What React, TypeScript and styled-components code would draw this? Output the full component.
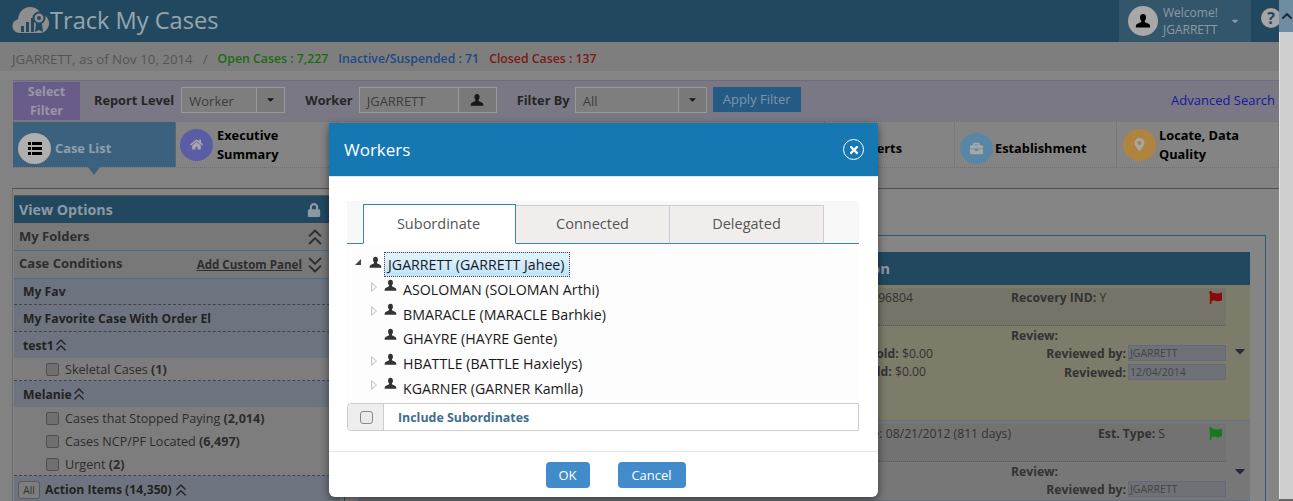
import React from "react";
import styled, { createGlobalStyle } from "styled-components";
import { FaHome, FaBriefcase, FaMapMarkerAlt, FaLock, FaFlag, FaTimes, FaCaretDown } from "react-icons/fa";
import { ChevronsUp, ChevronsDown, ChevronUp } from "lucide-react";

const SHADE = 0.3;
// Colour under the backdrop that comes out as the given dimmed colour.
const lit = (hex: string) => {
  const n = parseInt(hex.slice(1), 16);
  const c = [n >> 16, (n >> 8) & 255, n & 255].map((v) => Math.min(255, Math.round(v / (1 - SHADE))));
  return `rgb(${c.join(",")})`;
};

const Global = createGlobalStyle`
  html, body { margin: 0; height: 501px; overflow: hidden; background: #fff; }
  * { box-sizing: border-box; }
  body { font-family: "Open Sans", "Liberation Sans", sans-serif; }
`;

const Shell = styled.div`display: flex; width: 1293px; height: 501px; overflow: hidden; position: relative;`;
const Page = styled.div`width: 1279px; height: 501px; flex: none; overflow: hidden; background: ${lit("#828282")}; position: relative;`;
const Scrollbar = styled.div`flex: 1; display: flex; flex-direction: column; background: #cfcfcf;`;
const ScrollUp = styled.div`height: 32px; background: #6f8da1; color: #1d2c36; display: flex; align-items: center; justify-content: center;`;
const ScrollTrack = styled.div`flex: 1; border-left: 1px solid #e2e2e2;`;
const ScrollEnd = styled.div`height: 2px; background: #666;`;

const Header = styled.header`height: 42px; background: ${lit("#23495f")}; display: flex; align-items: stretch; padding-left: 12px;`;
const Brand = styled.div`display: flex; align-items: center; flex: 1; color: ${lit("#96a5ae")}; font-size: 23.6px; line-height: 38px; padding-bottom: 3px;`;
const UserBox = styled.div`width: 132px; background: ${lit("#33566b")}; display: flex; align-items: center; padding-left: 9px; gap: 5px; position: relative;`;
const Avatar = styled.div`width: 30px; height: 30px; border-radius: 50%; background: ${lit("#a9a9a9")}; color: #000; display: flex; align-items: center; justify-content: center;`;
const UserText = styled.div`color: ${lit("#8c9aa3")}; font-size: 12px; line-height: 17px; flex: 1;`;
const UserCaret = styled.span`color: ${lit("#8c9aa3")}; font-size: 10px; margin-right: 11px; display: flex;`;
const Help = styled.div`width: 20px; height: 20px; margin: 8px -2px 0 10px; flex: none; border-radius: 50%; background: ${lit("#a5a5a5")}; color: ${lit("#23495f")}; font-size: 16px; font-weight: 700; line-height: 20px; text-align: center;`;

const StatusBar = styled.div`height: 29px; padding: 4px 0 0 12px; background: ${lit("#7f7f7f")}; display: flex; align-items: center; font-size: 13.3px; color: ${lit("#555555")};`;
const Slash = styled.span`margin: 0 10px;`;
const Count = styled.span<{ $c: string }>`color: ${(p) => p.$c}; font-weight: 600; margin-right: 10px; font-size: 12.3px;`;
const StatusGap = styled.div`height: 9px; background: ${lit("#868686")};`;

const FilterRow = styled.div`height: 41px; margin-left: 13px; border-top: 1px solid ${lit("#6e6c85")}; background: ${lit("#7a7985")}; display: flex; align-items: center; font-size: 12.8px; padding-bottom: 3px;`;
const SelectFilter = styled.div`width: 67px; height: 38px; margin-top: 3px; background: ${lit("#6b5d89")}; color: ${lit("#9a96a8")}; font-weight: 700; font-size: 12.5px; line-height: 19px; text-align: center; margin-bottom: 1px; padding-bottom: 2px;`;
const FieldLabel = styled.span<{ $l: number; $r?: number }>`font-weight: 700; color: ${lit("#262626")}; margin: 0 ${(p) => p.$r ?? 7}px 0 ${(p) => p.$l}px;`;
const FieldBox = styled.div<{ $w: number }>`width: ${(p) => p.$w}px; height: 26px; border: 1px solid ${lit("#9a9a9a")}; display: flex; align-items: stretch; color: ${lit("#3d3d3d")}; background: ${lit("#7f7f80")};`;
const FieldValue = styled.div`flex: 1; padding: 0 7px; line-height: 26px; font-size: 13px;`;
const FieldButton = styled.div<{ $w: number }>`width: ${(p) => p.$w}px; border-left: 1px solid ${lit("#9a9a9a")}; background: ${lit("#7a7a7a")}; color: #222; display: flex; align-items: center; justify-content: center; font-size: 11px;`;
const Apply = styled.div`width: 88px; height: 25px; margin-left: 6px; margin-bottom: 1px; background: ${lit("#255a85")}; color: ${lit("#7e94a8")}; font-size: 13px; line-height: 25px; text-align: center;`;
const Advanced = styled.a`margin-left: auto; margin-right: 4px; color: ${lit("#1a1a9c")}; font-size: 13px; margin-top: 1px;`;

const TabRow = styled.nav`height: 47px; margin-left: 13px; border-top: 1px dotted ${lit("#6f6f6f")}; border-bottom: 1px dotted ${lit("#6f6f6f")}; display: flex; background: ${lit("#858585")};`;
const NavTab = styled.div<{ $w?: number; $on?: boolean; $pl?: number; $gap?: number; $single?: boolean }>`
  ${(p) => (p.$w ? `width: ${p.$w}px; flex: none;` : "flex: 1;")}
  display: flex; align-items: center; gap: ${(p) => p.$gap ?? 4}px; padding-left: ${(p) => p.$pl ?? 4}px; position: relative;
  padding-top: ${(p) => (p.$single ? 7 : 0)}px;
  border-right: 1px dotted ${lit("#6f6f6f")};
  background: ${(p) => (p.$on ? lit("#3c627f") : "transparent")};
  color: ${(p) => (p.$on ? lit("#8f9eac") : "#000")};
  font-weight: 700; font-size: 12.8px; line-height: 19px;
  ${(p) => p.$on && `&::after { content: ""; position: absolute; left: 75px; bottom: -8px; border: 6px solid transparent; border-bottom-width: 0; border-top: 8px solid ${lit("#3c627f")}; }`}
`;
const NavIcon = styled.div<{ $bg: string; $c: string; $h?: number }>`width: 33px; height: ${(p) => p.$h ?? 32}px; flex: none; border-radius: 50%; background: ${(p) => lit(p.$bg)}; color: ${(p) => p.$c}; display: flex; align-items: center; justify-content: center; font-size: 13px;`;

const Main = styled.main`margin: 20px 0 0 12px; border-top: 1px solid ${lit("#4f4f4f")}; border-left: 1px solid ${lit("#6b6b6b")}; display: flex; height: 320px; background: ${lit("#868686")}; padding-left: 1px;`;
const Sidebar = styled.aside`width: 326px; flex: none; margin-top: 6px;`;
const SideHead = styled.div`height: 28px; background: ${lit("#23495f")}; color: ${lit("#8b9aa5")}; font-size: 14.2px; font-weight: 700; display: flex; align-items: center; justify-content: space-between; padding: 0 19px 0 5px; border-top: 1px solid ${lit("#555555")};`;
const Section = styled.div<{ $pb: number }>`height: 28px; padding: 0 20px ${(p) => p.$pb}px 5px; border-bottom: 1px solid ${lit("#3f6f8d")}; color: ${lit("#2e2e2e")}; font-size: 13px; font-weight: 700; background: ${lit("#797979")}; display: flex; align-items: center; justify-content: space-between;`;
const SectionRight = styled.div`display: flex; align-items: center; gap: 7px; padding-top: 3px;`;
const AddLink = styled.span`text-decoration: underline; font-size: 11.6px;`;
const BigUp = styled(ChevronsUp)`margin: -6px -8px -6px -7px;`;
const BigDown = styled(ChevronsDown)`margin: -6px -8px -6px -7px;`;
const SmallUp = styled(ChevronsUp)`margin: -5px -6px -5px -6px;`;
const Group = styled.div<{ $h?: number }>`height: ${(p) => p.$h ?? 27}px; padding: 0 9px; background: ${lit("#6e7480")}; color: ${lit("#232323")}; font-size: 12.2px; font-weight: 700; display: flex; align-items: center; gap: 3px; border-bottom: 1px dashed ${lit("#444444")};`;
const GroupPlain = styled(Group)`border-bottom: none;`;
const Check = styled.label`height: 23px; padding-left: 32px; background: ${lit("#7e7e7e")}; color: ${lit("#2c2c2c")}; font-size: 12.6px; display: flex; align-items: center; gap: 6px; b { font-weight: 700; }`;
const Box = styled.span`width: 13px; height: 13px; border-radius: 2px; border: 1px solid ${lit("#4f4f4f")}; background: ${lit("#6f6f6f")}; flex: none;`;
const CheckLast = styled(Check)`border-bottom: 1px dashed ${lit("#444444")};`;
const ActionRow = styled.div`height: 27px; padding: 0 4px; background: ${lit("#6e7480")}; color: ${lit("#232323")}; font-size: 12.2px; font-weight: 700; display: flex; align-items: center; gap: 5px;`;
const AllBtn = styled.span`width: 22px; height: 18px; border: 1px solid ${lit("#5a5a5a")}; border-radius: 3px; background: ${lit("#7f7f7f")}; font-size: 10px; font-weight: 400; text-align: center; line-height: 16px; color: ${lit("#333333")};`;

const Content = styled.section`width: 922px; margin: 46px 0 0 4px; border: 1px solid ${lit("#2a5a70")}; border-bottom: none; padding: 16px 15px 0 13px; flex: none; height: 300px;`;
const PanelHead = styled.div`height: 33px; background: ${lit("#23495f")}; color: ${lit("#8b9aa5")}; font-size: 15px; font-weight: 700; line-height: 33px; text-align: right; padding-right: 360px;`;
const Card = styled.div<{ $bg: string }>`background: ${(p) => lit(p.$bg)}; display: grid; grid-template-columns: 868px 1fr; border-bottom: 1px solid ${lit("#5f7480")}; padding-top: 3px; color: ${lit("#333333")}; font-size: 12.2px;`;
const CardTall = styled(Card)`height: 136px;`;
const CardMain = styled.div``;
const TopBlock = styled.div<{ $bg: string }>`height: 38px; background: ${(p) => lit(p.$bg)}; border-bottom: 1px dotted ${lit("#5a5a5a")}; display: grid; grid-template-columns: 653px 1fr;`;
const LeftCell = styled.div<{ $pr: number }>`text-align: right; padding: 0 ${(p) => p.$pr}px 0 0; line-height: 18px; padding-top: 1px;`;
const MidCell = styled.div<{ $pl?: number }>`display: flex; justify-content: space-between; padding: 1px 4px 0 ${(p) => p.$pl ?? 0}px; line-height: 18px; b { font-weight: 700; }`;
const FlagMark = styled.span<{ $c: string }>`color: ${(p) => p.$c}; font-size: 13px; margin-top: 1px;`;
const LowerBlock = styled.div`display: grid; grid-template-columns: 653px 1fr;`;
const Amounts = styled.div`padding-top: 19px; line-height: 18px; text-align: right; b { font-weight: 700; }`;
const Amount = styled.div<{ $pr: number }>`padding-right: ${(p) => p.$pr}px;`;
const Review = styled.div`padding-top: 1px; font-weight: 700;`;
const ReviewTitle = styled.div`line-height: 18px;`;
const ReviewRow = styled.div`display: flex; justify-content: flex-end; align-items: center; gap: 2px; margin-bottom: 3px; height: 16px;`;
const ReviewInput = styled.div`width: 98px; height: 16px; border: 1px solid ${lit("#646b7c")}; background: ${lit("#6f7278")}; color: ${lit("#444444")}; font-weight: 400; font-size: 10.5px; line-height: 15px; padding-left: 1px;`;
const CaretCol = styled.div`color: ${lit("#2a2a3c")}; padding: 55px 0 0 6px; font-size: 16px; line-height: 1;`;
const CaretColShort = styled(CaretCol)`padding-top: 39px;`;

const Backdrop = styled.div`position: absolute; inset: 0; background: rgba(0,0,0,${SHADE}); padding: 123px 0 0 329px;`;
const Modal = styled.div`width: 549px; height: 374px; background: #fff; border-radius: 0 0 6px 6px; box-shadow: 0 3px 9px rgba(0,0,0,.5); display: flex; flex-direction: column; font-family: "Open Sans", sans-serif;`;
const ModalHead = styled.div`height: 54px; flex: none; background: #1578b2; border-bottom: 1px solid #e5e5e5; color: #fff; font-size: 17px; display: flex; align-items: center; justify-content: space-between; padding: 0 14px 0 15px;`;
const CloseBtn = styled.span`width: 21px; height: 21px; border-radius: 50%; border: 1.5px solid #fff; display: flex; align-items: center; justify-content: center; font-size: 12px;`;
const ModalBody = styled.div`padding: 24px 19px 0 18px; flex: 1;`;
const TabStrip = styled.div`height: 43px; background: #f8f8f8; display: flex; align-items: flex-end; padding-left: 16px; padding-right: 35px; border-bottom: 1px solid #3a85ad;`;
const TabItem = styled.div<{ $w: number }>`
  width: ${(p) => p.$w}px; height: 39px; margin-bottom: -1px; font-size: 14.5px; line-height: 36px; text-align: center;
  color: #555; background: #f1eded;
  border: 1px solid #c8cdd9; border-left-width: 0; border-bottom-color: #3a85ad;
`;
const ActiveTab = styled(TabItem)`
  height: 40px; line-height: 37px; padding-right: 2px; background: #fff;
  border: 1px solid #3a85ad; border-top-color: #2f83ad; border-bottom-color: #fff;
`;
const Tree = styled.div`height: 159px; background: #fdfdfd; padding: 8px 0 0 8px; font-size: 14.2px; color: #1a1a1a;`;
const TreeRoot = styled.div`height: 26px; padding-bottom: 1px; display: flex; align-items: center;`;
const TreeNode = styled.div`height: 24.6px; display: flex; align-items: center; padding-left: 15px;`;
const Toggle = styled.span<{ $up: number }>`width: 14px; height: 12px; flex: none; display: flex; margin-top: -${(p) => p.$up}px;`;
const PersonSlot = styled.span<{ $up: number }>`width: 14px; flex: none; display: flex; color: #333; margin-top: -${(p) => p.$up}px;`;
const NodeLabel = styled.span`padding: 0 4px; margin-left: 1px; line-height: 24px; white-space: nowrap;`;
const SelectedLabel = styled.span`padding: 0 4px 0 3px; margin-left: 1px; height: 25px; line-height: 24px; white-space: nowrap; background: linear-gradient(#e4f4ff, #bfe3fb); border: 1px dotted #444;`;
const Include = styled.div`height: 28px; border: 1px solid #ccc; border-radius: 4px 0 0 4px; display: flex; align-items: stretch;`;
const IncludeBox = styled.div`width: 36px; background: #eee; border-right: 1px solid #ccc; display: flex; align-items: center; justify-content: center; border-radius: 4px 0 0 4px; padding: 1px 0 0 2px;`;
const IncludeCheck = styled.span`width: 13px; height: 13px; border: 1.5px solid #888; border-radius: 3px; background: #eaeaea;`;
const IncludeLabel = styled.div`padding-left: 14px; font-size: 12.4px; font-weight: 700; color: #3f6d8e; line-height: 27px;`;
const ModalFoot = styled.div`height: 46px; flex: none; border-top: 1px solid #e5e5e5; display: flex; justify-content: center; align-items: flex-start; gap: 28px; padding: 10px 0 0 24px;`;
const Btn = styled.div<{ $w: number }>`width: ${(p) => p.$w}px; height: 26px; border-radius: 4px; background: #428bca; color: #fff; font-size: 13px; line-height: 26px; text-align: center;`;

const Person = ({ size = 13 }: { size?: number }) => (
  <svg width={size} height={size} viewBox="0 0 16 16" fill="currentColor">
    <path d="M8 1C6 1 5 2.500 5 4.500c0 1.300.5 2.500 1.200 3.200v1.300L2 11c-1 .5-1.200 2-1.200 3.500h14.400c0-1.500-.2-3-1.200-3.500L9.800 9V7.700C10.500 7 11 5.800 11 4.500 11 2.500 10 1 8 1z" />
  </svg>
);

const ListGlyph = () => (
  <svg width="14" height="13" viewBox="0 0 14 13" fill="currentColor">
    <path d="M0 0h3v3H0zM4 0h10v3H4zM0 5h3v3H0zM4 5h10v3H4zM0 10h3v3H0zM4 10h10v3H4z" />
  </svg>
);

const Collapsed = () => (
  <svg width="6" height="10" viewBox="0 0 6 10" style={{ margin: "1px 0 0 1px" }}>
    <path d="M.5.5L5.500 5 .5 9.500z" fill="#f4f4f4" stroke="#c4c4c4" />
  </svg>
);

const Expanded = () => (
  <svg width="6" height="6" viewBox="0 0 6 6" style={{ margin: "3px 0 0 0" }}>
    <path d="M6 0v6H0z" fill="#444" />
  </svg>
);

const Logo = () => (
  <svg width="38" height="29" viewBox="0 0 38 29">
    <path fill={lit("#8f8f8f")} d="M8 28C3.500 28 0.500 25 0.500 21c0-3.500 2.500-6 5.500-6.800C6.500 8 11 2 18 2c5.500 0 9.500 3 11 7.500 4.500.5 8 3.500 8 8.500 0 5.500-4 10-9 10z" />
    <g fill={lit("#23495f")}>
      <rect x="9" y="21" width="3" height="6" />
      <rect x="14" y="17" width="3" height="10" />
      <rect x="19" y="13" width="3" height="14" />
      <path d="M24 19l-1 8 4-2 4 2-1-8z" />
    </g>
    <circle cx="27" cy="13" r="5.500" fill={lit("#8f8f8f")} stroke={lit("#23495f")} strokeWidth="2" />
    <circle cx="27" cy="13" r="2" fill={lit("#23495f")} />
  </svg>
);

const nodes = [
  { t: "ASOLOMAN (SOLOMAN Arthi)", kids: true },
  { t: "BMARACLE (MARACLE Barhkie)", kids: true },
  { t: "GHAYRE (HAYRE Gente)", kids: false },
  { t: "HBATTLE (BATTLE Haxielys)", kids: true },
  { t: "KGARNER (GARNER Kamlla)", kids: true },
];

export default function App() {
  return (
    <Shell>
      <Global />
      <Page>
        <Header>
          <Brand>
            <Logo />
            Track My Cases
          </Brand>
          <UserBox>
            <Avatar><Person size={16} /></Avatar>
            <UserText>Welcome!<br />JGARRETT</UserText>
            <UserCaret><FaCaretDown /></UserCaret>
          </UserBox>
          <Help>?</Help>
        </Header>
        <StatusBar>
          JGARRETT, as of Nov 10, 2014
          <Slash>/</Slash>
          <Count $c={lit("#1f6b10")}>Open Cases : 7,227</Count>
          <Count $c={lit("#1d4a83")}>Inactive/Suspended : 71</Count>
          <Count $c={lit("#7e1a1a")}>Closed Cases : 137</Count>
        </StatusBar>
        <StatusGap />
        <FilterRow>
          <SelectFilter>Select<br />Filter</SelectFilter>
          <FieldLabel $l={14}>Report Level</FieldLabel>
          <FieldBox $w={104}><FieldValue>Worker</FieldValue><FieldButton $w={28}><FaCaretDown /></FieldButton></FieldBox>
          <FieldLabel $l={20} $r={6}>Worker</FieldLabel>
          <FieldBox $w={138}><FieldValue>JGARRETT</FieldValue><FieldButton $w={38}><Person size={14} /></FieldButton></FieldBox>
          <FieldLabel $l={20} $r={5}>Filter By</FieldLabel>
          <FieldBox $w={132}><FieldValue>All</FieldValue><FieldButton $w={28}><FaCaretDown /></FieldButton></FieldBox>
          <Apply>Apply Filter</Apply>
          <Advanced>Advanced Search</Advanced>
        </FilterRow>
        <TabRow>
          <NavTab $w={163} $on $pl={5} $single><NavIcon $bg="#b0b0b0" $c="#000" $h={31}><ListGlyph /></NavIcon>Case List</NavTab>
          <NavTab $w={162}><NavIcon $bg="#5a5ea6" $c={lit("#a8a8a8")}><FaHome /></NavIcon><span>Executive<br />Summary</span></NavTab>
          <NavTab />
          <NavTab $w={130} $pl={2} $single><NavIcon $bg="#5b8fb0" $c={lit("#a8a8a8")} $h={31}><FaFlag /></NavIcon>Alerts</NavTab>
          <NavTab $w={162} $pl={5} $gap={2} $single><NavIcon $bg="#5b87a6" $c={lit("#a8a8a8")} $h={31}><FaBriefcase /></NavIcon>Establishment</NavTab>
          <NavTab $w={162} $pl={6} $gap={3}><NavIcon $bg="#b08540" $c={lit("#a8a8a8")}><FaMapMarkerAlt /></NavIcon><span>Locate, Data<br />Quality</span></NavTab>
        </TabRow>
        <Main>
          <Sidebar>
            <SideHead>View Options <FaLock size={14} /></SideHead>
            <Section $pb={2}>My Folders<SectionRight><BigUp size={26} strokeWidth={1.8} /></SectionRight></Section>
            <Section $pb={3}>Case Conditions<SectionRight><AddLink>Add Custom Panel</AddLink><BigDown size={26} strokeWidth={1.8} /></SectionRight></Section>
            <Group $h={26}>My Fav</Group>
            <Group>My Favorite Case With Order El</Group>
            <GroupPlain $h={26}>test1 <SmallUp size={20} strokeWidth={1.6} /></GroupPlain>
            <CheckLast><Box /><span>Skeletal Cases <b>(1)</b></span></CheckLast>
            <GroupPlain $h={26}>Melanie <SmallUp size={20} strokeWidth={1.6} /></GroupPlain>
            <Check><Box /><span>Cases that Stopped Paying <b>(2,014)</b></span></Check>
            <Check><Box /><span>Cases NCP/PF Located <b>(6,497)</b></span></Check>
            <CheckLast><Box /><span>Urgent <b>(2)</b></span></CheckLast>
            <ActionRow><AllBtn>All</AllBtn>Action Items (14,350) <SmallUp size={20} strokeWidth={1.6} /></ActionRow>
          </Sidebar>
          <Content>
            <PanelHead>Case Information</PanelHead>
            <CardTall $bg="#7d7b6b">
              <CardMain>
                <TopBlock $bg="#76756a">
                  <LeftCell $pr={98}>Case ID: 1096804</LeftCell>
                  <MidCell><span><b>Recovery IND:</b> Y</span><FlagMark $c={lit("#8b0a0a")}><FaFlag /></FlagMark></MidCell>
                </TopBlock>
                <LowerBlock>
                  <Amounts>
                    <Amount $pr={78}><b>Threshold:</b> $0.00</Amount>
                    <Amount $pr={85}><b>On Hold:</b> $0.00</Amount>
                  </Amounts>
                  <Review>
                    <ReviewTitle>Review:</ReviewTitle>
                    <ReviewRow>Reviewed by:<ReviewInput>JGARRETT</ReviewInput></ReviewRow>
                    <ReviewRow>Reviewed:<ReviewInput>12/04/2014</ReviewInput></ReviewRow>
                  </Review>
                </LowerBlock>
              </CardMain>
              <CaretCol><FaCaretDown /></CaretCol>
            </CardTall>
            <Card $bg="#787878">
              <CardMain>
                <TopBlock $bg="#737373">
                  <LeftCell $pr={0}>Established Date: 08/21/2012 (811 days)</LeftCell>
                  <MidCell $pl={87}><span><b>Est. Type:</b> S</span><FlagMark $c={lit("#1a7a1a")}><FaFlag /></FlagMark></MidCell>
                </TopBlock>
                <LowerBlock>
                  <Amounts />
                  <Review>
                    <ReviewTitle>Review:</ReviewTitle>
                    <ReviewRow>Reviewed by:<ReviewInput>JGARRETT</ReviewInput></ReviewRow>
                  </Review>
                </LowerBlock>
              </CardMain>
              <CaretColShort><FaCaretDown /></CaretColShort>
            </Card>
          </Content>
        </Main>
        <Backdrop>
          <Modal>
            <ModalHead>Workers<CloseBtn><FaTimes /></CloseBtn></ModalHead>
            <ModalBody>
              <TabStrip>
                <ActiveTab $w={153}>Subordinate</ActiveTab>
                <TabItem $w={154}>Connected</TabItem>
                <TabItem $w={154}>Delegated</TabItem>
              </TabStrip>
              <Tree>
                <TreeRoot>
                  <Toggle $up={5}><Expanded /></Toggle>
                  <PersonSlot $up={5}><Person /></PersonSlot>
                  <SelectedLabel>JGARRETT (GARRETT Jahee)</SelectedLabel>
                </TreeRoot>
                {nodes.map((n) => (
                  <TreeNode key={n.t}>
                    <Toggle $up={7}>{n.kids && <Collapsed />}</Toggle>
                    <PersonSlot $up={10}><Person /></PersonSlot>
                    <NodeLabel>{n.t}</NodeLabel>
                  </TreeNode>
                ))}
              </Tree>
              <Include>
                <IncludeBox><IncludeCheck /></IncludeBox>
                <IncludeLabel>Include Subordinates</IncludeLabel>
              </Include>
            </ModalBody>
            <ModalFoot>
              <Btn $w={44}>OK</Btn>
              <Btn $w={68}>Cancel</Btn>
            </ModalFoot>
          </Modal>
        </Backdrop>
      </Page>
      <Scrollbar>
        <ScrollUp><ChevronUp size={16} strokeWidth={3} /></ScrollUp>
        <ScrollTrack />
        <ScrollEnd />
      </Scrollbar>
    </Shell>
  );
}
